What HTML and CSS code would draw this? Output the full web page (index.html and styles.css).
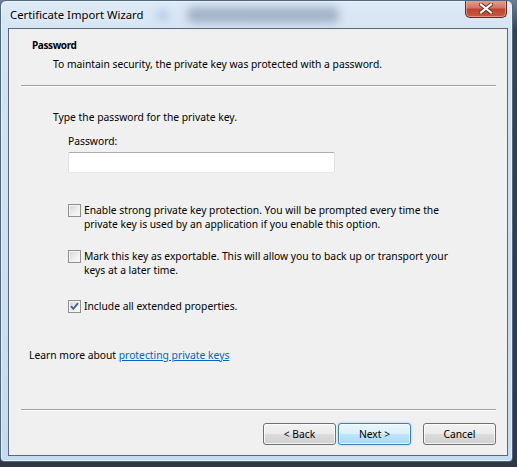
FILE: index.html
```html
<!DOCTYPE html>
<html>
<head>
<meta charset="utf-8">
<title>Certificate Import Wizard</title>
<link rel="stylesheet" href="styles.css">
</head>
<body>
<div class="window">
  <span class="glass-blob blob-a"></span>
  <span class="glass-blob blob-b"></span>
  <div class="titlebar">
    <span class="title">Certificate Import Wizard</span>
    <div class="close">
      <svg width="14" height="11" viewBox="0 0 14 11"><path d="M2 1.5 L12 9.5 M12 1.5 L2 9.5" stroke="#6b2a22" stroke-width="4" stroke-linecap="square"/><path d="M2 1.5 L12 9.5 M12 1.5 L2 9.5" stroke="#ffffff" stroke-width="2.2" stroke-linecap="square"/></svg>
    </div>
  </div>
  <div class="client">
    <div class="header">
      <div class="h-title">Password</div>
      <div class="h-sub">To maintain security, the private key was protected with a password.</div>
    </div>
    <div class="sep"></div>
    <div class="content">
      <div class="intro">Type the password for the private key.</div>
      <div class="pw-label">Password:</div>
      <div class="input"></div>
      <div class="check-row row1">
        <span class="cb"></span>
        <span class="cb-text">Enable strong private key protection. You will be prompted every time the<br>private key is used by an application if you enable this option.</span>
      </div>
      <div class="check-row row2">
        <span class="cb"></span>
        <span class="cb-text">Mark this key as exportable. This will allow you to back up or transport your<br>keys at a later time.</span>
      </div>
      <div class="check-row row3">
        <span class="cb checked"><svg width="11" height="11" viewBox="0 0 11 11"><path d="M2 5.2 L4.3 7.8 L9 2.2" fill="none" stroke="#4a5f8e" stroke-width="1.9"/></svg></span>
        <span class="cb-text">Include all extended properties.</span>
      </div>
      <div class="learn">Learn more about <a class="link">protecting private keys</a></div>
    </div>
    <div class="sep"></div>
    <div class="footer">
      <span class="btn">&lt; Back</span>
      <span class="btn default">Next &gt;</span>
      <span class="btn cancel">Cancel</span>
    </div>
  </div>
</div>
</body>
</html>
```
FILE: styles.css
```css
* { box-sizing: border-box; }
html, body { margin: 0; padding: 0; }
body {
  width: 517px;
  height: 467px;
  overflow: hidden;
  background: linear-gradient(#6d7f95 0, #39434f 30px, #2f3843 100%);
  font-family: "Noto Sans", "Open Sans", sans-serif;
  font-size: 10.3px;
  line-height: 15px;
  color: #000;
}
.window {
  position: relative;
  width: 513px;
  height: 462px;
  border: 1px solid #4f6780;
  border-radius: 6px 6px 4px 4px;
  background: linear-gradient(#dde9f6 0, #d3e3f3 40px, #c6dbf0 100%);
  box-shadow: inset 0 0 0 1px rgba(255,255,255,0.55);
  display: flex;
  flex-direction: column;
  overflow: hidden;
}
.glass-blob {
  position: absolute;
  filter: blur(4px);
  border-radius: 6px;
}
.blob-a { left: 186px; top: 6px; width: 152px; height: 16px; background: rgba(110,128,160,0.5); }
.blob-b { left: 157px; top: 10px; width: 10px; height: 9px; background: rgba(80,120,200,0.35); }
.titlebar {
  position: relative;
  height: 27px;
  display: flex;
  align-items: flex-start;
  padding-left: 9px;
}
.title {
  margin-top: 6px;
  font-size: 11.3px;
  color: #000;
  text-shadow: 0 0 6px rgba(255,255,255,0.9);
}
.close {
  margin-left: auto;
  margin-right: 5px;
  margin-top: -1px;
  width: 42px;
  height: 18px;
  border: 1px solid #5e2a26;
  border-top: none;
  border-radius: 0 0 5px 5px;
  background: linear-gradient(#e7a595 0, #d27563 45%, #c0432f 55%, #c85a3e 100%);
  box-shadow: inset 0 0 0 1px rgba(255,200,190,0.5);
  display: flex;
  align-items: center;
  justify-content: center;
}
.client {
  margin: 0 4px 0 7px;
  height: 428px;
  border: 1px solid #5a6877;
  background: #f0f0f0;
  display: flex;
  flex-direction: column;
}
.header { padding: 9px 0 0 23px; }
.h-title { font-weight: bold; font-size: 10px; letter-spacing: -0.4px; }
.h-sub { margin-top: 4px; padding-left: 21px; }
.sep {
  margin: 13px 11px 0 12px;
  height: 2px;
  border-top: 1px solid #a0a0a0;
  border-bottom: 1px solid #ffffff;
}
.content {
  flex: 1;
  padding: 23px 0 0 44px;
}
.pw-label { margin: 9px 0 0 15px; }
.input {
  margin: 3px 0 0 15px;
  width: 267px;
  height: 21px;
  background: #fff;
  border: 1px solid #dbdfe6;
  border-top-color: #abadb3;
  border-bottom-color: #e3e9ef;
  border-radius: 2px;
}
.check-row {
  display: flex;
  align-items: flex-start;
  margin-left: 15px;
  line-height: 14px;
}
.row1 { margin-top: 30px; }
.row2 { margin-top: 18px; }
.row3 { margin-top: 22px; }
.cb {
  flex: none;
  width: 13px;
  height: 13px;
  margin-top: 1px;
  border: 1px solid #8e8f8f;
  background: linear-gradient(135deg, #d2d4d8 0, #eeeff0 60%, #fbfbfb 100%);
  box-shadow: inset 0 0 0 1px #f4f4f4;
  display: flex;
  align-items: center;
  justify-content: center;
}
.cb-text { margin-left: 3px; }
.learn { margin: 35px 0 0 -24px; }
.link { color: #0066cc; text-decoration: underline; }
.footer {
  display: flex;
  justify-content: flex-end;
  padding: 12px 11px 10px 0;
}
.btn {
  width: 73px;
  height: 22px;
  border: 1px solid #707070;
  border-radius: 3px;
  background: linear-gradient(#f2f2f2 0, #ebebeb 50%, #dddddd 50%, #cfcfcf 100%);
  box-shadow: inset 0 0 0 1px rgba(255,255,255,0.75);
  display: flex;
  align-items: center;
  justify-content: center;
}
.btn.default {
  margin-left: 2px;
  border-color: #3c7fb1;
  background: linear-gradient(#eaf6fd 0, #d9f0fc 50%, #bee6fd 50%, #a7d9f5 100%);
  box-shadow: inset 0 0 0 1px rgba(255,255,255,0.7), 0 0 2px rgba(60,140,220,0.5);
}
.btn.cancel { margin-left: 12px; }
```
